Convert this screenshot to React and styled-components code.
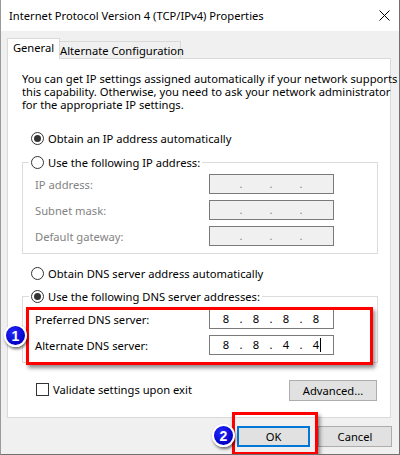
import React from 'react';
import styled, { createGlobalStyle } from 'styled-components';

const GlobalStyle = createGlobalStyle`
  html, body {
    margin: 0;
    padding: 0;
    background: #f0f0f0;
  }
  body {
    font-family: "Noto Sans", "Liberation Sans", sans-serif;
    font-size: 11.2px;
    color: #000;
  }
`;

const Window = styled.div`
  position: relative;
  width: 400px;
  height: 455px;
  box-sizing: border-box;
  background: #f0f0f0;
  border-left: 1px solid #9a9a9a;
  border-right: 1px solid #707070;
  border-bottom: 1px solid #707070;
  display: flex;
  flex-direction: column;
  overflow: hidden;
`;

const TitleBar = styled.div`
  height: 31px;
  flex: none;
  background: #fff;
  display: flex;
  align-items: center;
  justify-content: space-between;
  padding-left: 8px;
`;

const Title = styled.span`
  font-size: 11.2px;
  line-height: 16px;
`;

const CloseButton = styled.div`
  width: 30px;
  height: 31px;
  display: flex;
  align-items: center;
  justify-content: center;
`;

const Body = styled.div`
  padding: 7px 0 0 6px;
  display: flex;
  flex-direction: column;
`;

const TabStrip = styled.div`
  display: flex;
  align-items: flex-end;
  margin-bottom: -1px;
  position: relative;
  z-index: 1;
`;

const Tab = styled.div`
  box-sizing: border-box;
  height: ${p => (p.$active ? '21px' : '18px')};
  width: ${p => (p.$active ? '53px' : '121px')};
  padding: ${p => (p.$active ? '1px 0 0' : '1px 0 0')};
  text-align: center;
  background: ${p => (p.$active ? '#fff' : '#f0f0f0')};
  border: 1px solid #d9d9d9;
  border-bottom: ${p => (p.$active ? 'none' : '1px solid #d9d9d9')};
  border-left: ${p => (p.$active ? '1px solid #d9d9d9' : 'none')};
  line-height: 16px;
  white-space: nowrap;
`;

const Panel = styled.div`
  box-sizing: border-box;
  width: 384px;
  height: 360px;
  background: #fff;
  border: 1px solid #d9d9d9;
  padding: 13px 12px 0 14px;
  display: flex;
  flex-direction: column;
`;

const Intro = styled.p`
  margin: 0;
  line-height: 13px;
  white-space: nowrap;
`;

const RadioRow = styled.label`
  display: flex;
  align-items: center;
  height: 16px;
  gap: 4px;
  padding-left: 9px;
  margin-top: ${p => p.$top || 0}px;
  white-space: nowrap;
`;

const RadioDot = styled.span`
  box-sizing: border-box;
  width: 13px;
  height: 13px;
  border-radius: 50%;
  border: 1px solid #333;
  background: #fff;
  display: flex;
  align-items: center;
  justify-content: center;
  &::after {
    content: '';
    width: 7px;
    height: 7px;
    border-radius: 50%;
    background: ${p => (p.$checked ? '#333' : 'transparent')};
  }
`;

const GroupBox = styled.fieldset`
  margin: ${p => p.$top || 0}px 0 0;
  padding: ${p => p.$padTop || 4}px 0 7px 0;
  border: 1px solid #dcdcdc;
  display: flex;
  flex-direction: column;
  gap: 6px;
`;

const Legend = styled.legend`
  margin-left: 6px;
  padding: 0 2px 0 0;
`;

const LegendRadio = styled(RadioRow)`
  padding-left: 2px;
`;

const FieldRow = styled.div`
  display: flex;
  align-items: center;
  height: 20px;
  padding-left: 12px;
`;

const FieldLabel = styled.span`
  width: 174px;
  color: ${p => (p.$disabled ? '#838383' : '#000')};
`;

const IpBox = styled.div`
  box-sizing: border-box;
  width: 125px;
  height: 20px;
  border: 1px solid #7a7a7a;
  background: ${p => (p.$disabled ? '#f0f0f0' : '#fff')};
  display: flex;
  align-items: center;
  padding-left: 4px;
`;

const Octet = styled.span`
  width: 24px;
  text-align: center;
  line-height: 16px;
  position: relative;
`;

const Dot = styled.span`
  width: 6px;
  text-align: center;
  line-height: 16px;
  color: ${p => (p.$disabled ? '#8a8a8a' : '#000')};
`;

const Caret = styled.span`
  position: absolute;
  left: calc(50% + 4px);
  top: 1px;
  width: 1px;
  height: 14px;
  background: #000;
`;

const OptionsRow = styled.div`
  display: flex;
  align-items: center;
  justify-content: space-between;
  margin-top: 17px;
  padding-right: 1px;
`;

const CheckRow = styled.label`
  display: flex;
  align-items: center;
  gap: 4px;
  padding-left: 14px;
  margin-top: -3px;
`;

const CheckBox = styled.span`
  box-sizing: border-box;
  width: 13px;
  height: 13px;
  border: 1px solid #333;
  background: #fff;
`;

const Button = styled.button`
  box-sizing: border-box;
  height: 21px;
  width: ${p => p.$width || 75}px;
  font: inherit;
  color: #000;
  background: #e1e1e1;
  border: 1px solid ${p => (p.$default ? '#0078d7' : '#adadad')};
  box-shadow: ${p => (p.$default ? 'inset 0 0 0 1px #0078d7' : 'none')};
  padding: 0;
  line-height: 16px;
`;

const Footer = styled.div`
  display: flex;
  justify-content: flex-end;
  gap: 8px;
  padding: 8px 7px 0 0;
`;

const Highlight = styled.div`
  position: absolute;
  box-sizing: border-box;
  border: 3px solid #ff0000;
  box-shadow: 2px 3px 4px rgba(0, 0, 0, 0.45);
  pointer-events: none;
`;

const Badge = styled.div`
  position: absolute;
  box-sizing: border-box;
  width: 23px;
  height: 23px;
  border-radius: 50%;
  background: radial-gradient(circle at 40% 35%, #2a2aff, #0000c8 70%);
  border: 2px solid #fff;
  box-shadow: 1px 2px 3px rgba(0, 0, 0, 0.55);
  color: #fff;
  font-family: "Liberation Sans", Arial, sans-serif;
  font-weight: bold;
  font-size: 14px;
  display: flex;
  align-items: center;
  justify-content: center;
`;

const IpField = ({ octets, disabled, caret }) => (
  <IpBox $disabled={disabled}>
    {[0, 1, 2, 3].map(i => (
      <React.Fragment key={i}>
        <Octet>
          {octets ? octets[i] : ''}
          {caret && i === 3 && <Caret />}
        </Octet>
        {i < 3 && <Dot $disabled={disabled}>.</Dot>}
      </React.Fragment>
    ))}
  </IpBox>
);

const Radio = ({ checked, children, top }) => (
  <RadioRow $top={top}>
    <RadioDot $checked={checked} />
    {children}
  </RadioRow>
);

export default function App() {
  return (
    <Window>
      <GlobalStyle />
      <TitleBar>
        <Title>Internet Protocol Version 4 (TCP/IPv4) Properties</Title>
        <CloseButton>
          <svg width="11" height="11" viewBox="0 0 11 11">
            <path d="M0.5 0.5 L10.5 10.5 M10.5 0.5 L0.5 10.5" stroke="#000" strokeWidth="1" fill="none" />
          </svg>
        </CloseButton>
      </TitleBar>
      <Body>
        <TabStrip>
          <Tab $active>General</Tab>
          <Tab>Alternate Configuration</Tab>
        </TabStrip>
        <Panel>
          <Intro>
            You can get IP settings assigned automatically if your network supports<br />
            this capability. Otherwise, you need to ask your network administrator<br />
            for the appropriate IP settings.
          </Intro>
          <Radio checked top={19}>Obtain an IP address automatically</Radio>
          <GroupBox $top={8} $padTop={4}>
            <Legend>
              <LegendRadio>
                <RadioDot />
                Use the following IP address:
              </LegendRadio>
            </Legend>
            <FieldRow>
              <FieldLabel $disabled>IP address:</FieldLabel>
              <IpField disabled />
            </FieldRow>
            <FieldRow>
              <FieldLabel $disabled>Subnet mask:</FieldLabel>
              <IpField disabled />
            </FieldRow>
            <FieldRow>
              <FieldLabel $disabled>Default gateway:</FieldLabel>
              <IpField disabled />
            </FieldRow>
          </GroupBox>
          <Radio top={11}>Obtain DNS server address automatically</Radio>
          <GroupBox $top={7} $padTop={5}>
            <Legend>
              <LegendRadio>
                <RadioDot $checked />
                Use the following DNS server addresses:
              </LegendRadio>
            </Legend>
            <FieldRow>
              <FieldLabel>Preferred DNS server:</FieldLabel>
              <IpField octets={['8', '8', '8', '8']} />
            </FieldRow>
            <FieldRow>
              <FieldLabel>Alternate DNS server:</FieldLabel>
              <IpField octets={['8', '8', '4', '4']} caret />
            </FieldRow>
          </GroupBox>
          <OptionsRow>
            <CheckRow>
              <CheckBox />
              Validate settings upon exit
            </CheckRow>
            <Button $width={88}>Advanced...</Button>
          </OptionsRow>
        </Panel>
        <Footer>
          <Button $default $width={73}>OK</Button>
          <Button $width={74}>Cancel</Button>
        </Footer>
      </Body>
      <Highlight style={{ left: 25, top: 307, width: 347, height: 58 }} />
      <Badge style={{ left: 3, top: 324 }}>1</Badge>
      <Highlight style={{ left: 231, top: 412, width: 86, height: 43 }} />
      <Badge style={{ left: 211, top: 424 }}>2</Badge>
    </Window>
  );
}
